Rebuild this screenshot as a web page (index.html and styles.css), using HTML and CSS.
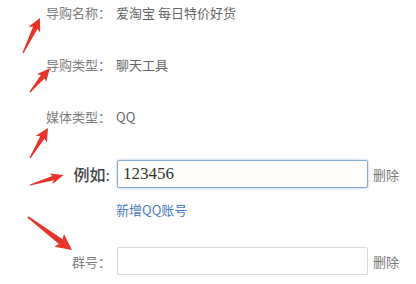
FILE: index.html
```html
<!DOCTYPE html>
<html lang="zh">
<head>
<meta charset="utf-8">
<link rel="stylesheet" href="styles.css">
</head>
<body>
<div class="page">
  <div class="form">
    <div class="row r1"><span class="label">导购名称：</span><span class="value">爱淘宝 每日特价好货</span></div>
    <div class="row r2"><span class="label">导购类型：</span><span class="value">聊天工具</span></div>
    <div class="row r3"><span class="label">媒体类型：</span><span class="value">QQ</span></div>
    <div class="row r4"><span class="label example">例如:</span><div class="field"><div class="input focused">123456</div><span class="del">删除</span></div></div>
    <div class="row r5"><span></span><span class="link">新增QQ账号</span></div>
    <div class="row r6"><span class="label">群号：</span><div class="field"><div class="input"></div><span class="del">删除</span></div></div>
  </div>
  <svg class="arrows" width="416" height="284" viewBox="0 0 416 284">
    <g fill="#e8332a">
      <polygon transform="translate(23,53) rotate(-64.1)" points="0,-0.6 28,-2.5 26,-6.5 39,0 26,6.5 28,2.5 0,0.6"/>
      <polygon transform="translate(30,92) rotate(-50.2)" points="0,-0.6 20,-2.5 18,-6 31,0 18,6 20,2.5 0,0.6"/>
      <polygon transform="translate(30,158) rotate(-59)" points="0,-0.6 24,-2.5 22,-6.5 35,0 22,6.5 24,2.5 0,0.6"/>
      <polygon transform="translate(30,185) rotate(-16.4)" points="0,-0.6 24,-2.2 22,-5.5 35,0 22,5.5 24,2.2 0,0.6"/>
      <polygon transform="translate(28,217) rotate(36.9)" points="0,-0.8 41,-3 39,-8 55,0 39,8 41,3 0,0.8"/>
    </g>
  </svg>
</div>
</body>
</html>
```
FILE: styles.css
```css
html, body {
  margin: 0;
  padding: 0;
  background: #ffffff;
}
.page {
  position: relative;
  width: 416px;
  height: 284px;
  overflow: hidden;
  font-family: "Noto Sans CJK SC", "Noto Sans", sans-serif;
  font-size: 13px;
}
.form {
  display: flex;
  flex-direction: column;
}
.row {
  display: grid;
  grid-template-columns: 111px 1fr;
  column-gap: 5px;
  align-items: center;
}
.r1 { height: 24px; margin-top: 0; }
.r2 { height: 24px; margin-top: 28px; }
.r3 { height: 24px; margin-top: 28px; }
.r4 { height: 30px; margin-top: 31px; }
.r5 { height: 20px; margin-top: 10px; }
.r6 { height: 30px; margin-top: 27px; }
.label {
  text-align: right;
  color: #7d7d7d;
  white-space: nowrap;
}
.value {
  color: #666666;
  white-space: nowrap;
}
.example {
  font-family: "Liberation Serif", "Noto Sans CJK SC", serif;
  font-size: 16px;
  font-weight: 500;
  color: #444444;
  padding-right: 1px;
}
.field {
  display: flex;
  align-items: center;
  gap: 5px;
  margin-left: 1px;
}
.input {
  box-sizing: border-box;
  width: 251px;
  height: 28px;
  border: 1px solid #d9d9d9;
  border-radius: 2px;
  background: #ffffff;
  font-family: "Liberation Serif", serif;
  font-size: 17px;
  color: #333333;
  line-height: 26px;
  padding-left: 5px;
}
.input.focused {
  border: 1px solid #86a9cf;
  box-shadow: 0 0 3px rgba(110, 150, 200, 0.6);
  background: #fffefa;
}
.del {
  color: #777777;
  white-space: nowrap;
}
.link {
  color: #4a7cc2;
  white-space: nowrap;
}
.arrows {
  position: absolute;
  left: 0;
  top: 0;
  pointer-events: none;
}
```
